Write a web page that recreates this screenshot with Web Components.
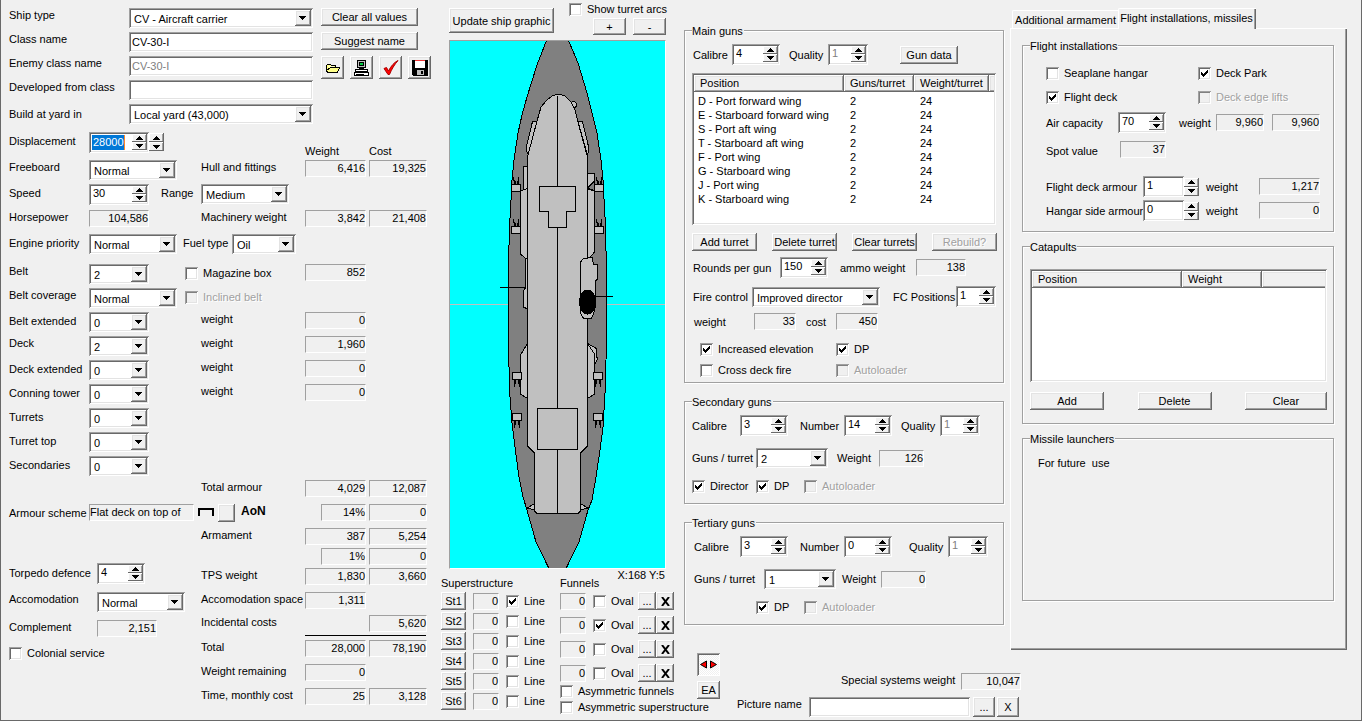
<!DOCTYPE html>
<html lang="en">
<head>
<meta charset="utf-8">
<title>Ship design</title>
<style>
  html, body { margin: 0; background: #f0f0f0; }
  body { font: 11px/14px "Liberation Sans", Arial, sans-serif; color: #000; }
</style>
</head>
<body>
<ship-designer></ship-designer>
<script>
const BASE = `
  *, *::before, *::after { box-sizing: border-box; }
  :host { --raised: inset -1px -1px #696969, inset 1px 1px #fff, inset -2px -2px #a0a0a0, inset 2px 2px #e3e3e3;
          --sunken: inset 1px 1px #a0a0a0, inset -1px -1px #fff, inset 2px 2px #696969, inset -2px -2px #e3e3e3;
          box-sizing: border-box; }
  button, input, select { font: inherit; color: inherit; margin: 0; padding: 0; border: 0; border-radius: 0; outline: 0; background: none; }
  label, button { white-space: nowrap; }
  svg { display: block; }
  .row { display: flex; }
`;

function define(name, css, html) {
  customElements.define(name, class extends HTMLElement {
    connectedCallback() {
      if (this.shadowRoot) return;
      const template = document.createElement('template');
      const body = typeof html === 'function' ? html(this) : html;
      template.innerHTML = `<style>${BASE}${css}</style>${body}`;
      this.attachShadow({ mode: 'open' }).append(template.content.cloneNode(true));
    }
  });
}
const attr = (el, name, fallback = '') => el.getAttribute(name) ?? fallback;
const tag = (el) => el.hasAttribute('label')
  ? `<label for="c">${attr(el, 'label')}</label>` : '';
const naming = (el) => el.hasAttribute('label') ? '' : `aria-label="${attr(el, 'name')}"`;
const off = (el) => el.hasAttribute('disabled') ? 'disabled' : '';

const FIELD = `
  :host { display: flex; align-items: flex-start; flex: none; }
  :host([mid]) { align-items: center; }
  label { flex: none; width: var(--l, auto); line-height: var(--lh, 14px); }
`;

define('ui-select', FIELD + `
  .box { position: relative; flex: none; width: var(--w); height: 20px; background: #fff; box-shadow: var(--sunken); }
  select { appearance: none; width: 100%; height: 20px; padding: 2px 18px 0 5px; line-height: 16px; }
  .drop { position: absolute; top: 2px; right: 2px; width: 16px; height: 16px; background: #f0f0f0;
          box-shadow: var(--raised); pointer-events: none; }
`, (el) => `${tag(el)}<div class="box"><select id="c" ${naming(el)}><option>${attr(el, 'value')}</option></select>
  <span class="drop"><svg width="16" height="16" shape-rendering="crispEdges"><path d="M4 6h7v1h-1v1h-1v1h-1v1h-1v-1h-1v-1h-1v-1h-1z"/></svg></span></div>`);

const ARROWS = `
  .ud { flex: none; display: flex; flex-direction: column; width: 15px; height: 17px; }
  .ud button { display: block; height: 8px; width: 15px; background: #f0f0f0; box-shadow: inset -1px -1px #696969, inset 1px 1px #fff, inset -2px 0 #a0a0a0; }
`;
const arrowButtons = `<span class="ud">
  <button type="button" aria-label="Increase"><svg width="15" height="8" shape-rendering="crispEdges"><path d="M7 2h1v1h1v1h1v1h1v1h-7v-1h1v-1h1v-1h1z"/></svg></button>
  <button type="button" aria-label="Decrease"><svg width="15" height="8" shape-rendering="crispEdges"><path d="M4 2h7v1h-1v1h-1v1h-1v1h-1v-1h-1v-1h-1v-1h-1z"/></svg></button></span>`;

define('ui-spin', FIELD + ARROWS + `
  .box { display: flex; justify-content: space-between; flex: none; width: var(--w); height: 21px; padding: 2px; background: #fff; box-shadow: var(--sunken); }
  input { flex: 1; min-width: 0; height: 15px; padding-left: 2px; appearance: textfield; line-height: 15px; }
  input::-webkit-inner-spin-button { appearance: none; }
  input:disabled { color: #808080; -webkit-text-fill-color: #808080; }
  :host([marked]) input { flex: none; width: 33px; margin: 1px 0 0 1px; background: #0078d7; color: #fff; padding-left: 1px; border-right: 1px solid #ff8728; }
  :host([split]) .box { width: calc(var(--w) - 15px); }
  :host([split]) .ud { height: 21px; justify-content: center; }
  :host([split]) .ud button { height: 9px; }
`, (el) => {
  const split = el.hasAttribute('split');
  return `${tag(el)}<div class="box"><input id="c" type="number" value="${attr(el, 'value')}" ${naming(el)} ${off(el)}>${split ? '' : arrowButtons}</div>${split ? arrowButtons : ''}`;
});

define('ui-updown', ARROWS + ':host { display: block; padding-top: 1px; } .ud button { height: 9px; } .ud { height: 18px; }', arrowButtons);

define('ui-text', FIELD + `
  input { flex: none; width: var(--w); height: 20px; padding: 0 3px 1px; background: #fff; box-shadow: var(--sunken); }
  input:disabled { color: #808080; }
`, (el) => `${tag(el)}<input id="c" type="text" value="${attr(el, 'value')}" ${off(el)}>`);

define('ui-readout', FIELD + `
  output { flex: none; display: block; width: var(--w); height: 17px; line-height: 15px; text-align: right; white-space: nowrap;
           border: 1px solid; border-color: #a0a0a0 #fff #fff #a0a0a0; }
  :host([left]) output { text-align: left; }
`, (el) => `${tag(el)}<output id="c" ${naming(el)}>${attr(el, 'value')}</output>`);

define('ui-check', `
  :host { display: flex; flex: none; align-items: center; height: 13px; width: var(--w, auto); }
  label { margin-left: 5px; line-height: 13px; }
  input { appearance: none; flex: none; width: 13px; height: 13px; background: #fff; box-shadow: var(--sunken); }
  .tick { position: relative; flex: none; width: 13px; height: 13px; }
  .tick input { display: block; }
  .tick svg { position: absolute; left: 3px; top: 3px; pointer-events: none; visibility: hidden; }
  input:checked + svg { visibility: visible; }
  input:disabled { background: #f0f0f0; box-shadow: inset 1px 1px #a0a0a0, inset -1px -1px #fff, inset 2px 2px #808080, inset -2px -2px #e3e3e3; }
  :host([disabled]) label { color: #a0a0a0; text-shadow: 1px 1px #fff; }
`, (el) => `<span class="tick"><input id="c" type="checkbox" ${off(el)} ${el.hasAttribute('checked') ? 'checked' : ''}>
  <svg width="7" height="7" shape-rendering="crispEdges"><path d="M0 2h1v1h1v1h1v-1h1v-1h1v-1h1v-1h1v3h-1v1h-1v1h-1v1h-1v1h-1v-1h-1v-1h-1z"/></svg></span>
  <label for="c">${attr(el, 'label')}</label>`);

define('ui-button', `
  :host { display: block; flex: none; width: var(--w); height: var(--h, 18px); }
  button { display: flex; align-items: center; justify-content: center; width: 100%; height: 100%; background: #f0f0f0; box-shadow: var(--raised); }
  button:disabled { color: #a0a0a0; text-shadow: 1px 1px #fff; }
  :host([pressed]) button { background: repeating-conic-gradient(#fff 0 25%, #f0f0f0 0 50%) 0 0 / 2px 2px;
    box-shadow: inset 1px 1px #a0a0a0, inset -1px -1px #fff, inset 2px 2px #696969; }
`, (el) => `<button type="button" aria-label="${attr(el, 'name')}" ${off(el)}><slot></slot></button>`.replace(' aria-label=""', ''));

define('ui-group', `
  :host { display: block; }
  fieldset { position: relative; height: 100%; margin: 0; padding: var(--pad, 13px 0 0 8px); min-width: 0; border: 1px solid #a0a0a0; box-shadow: 1px 1px #fff, inset 1px 1px #fff; }
  legend { position: absolute; top: -7px; left: 7px; padding: 0 1px 0 0; line-height: 14px; background: #f0f0f0; }
`, (el) => `<fieldset><legend>${attr(el, 'label')}</legend><slot></slot></fieldset>`);

define('ui-list', `
  :host { display: block; background: #fff; box-shadow: var(--sunken); padding: 2px; overflow: hidden; }
  table { width: 100%; table-layout: fixed; border-collapse: collapse; }
  th { height: 17px; padding: 0 0 0 6px; font-weight: 400; text-align: left; line-height: 15px; background: #f0f0f0; box-shadow: var(--raised); white-space: nowrap; }
  th:last-child { box-shadow: inset 0 -1px #696969, inset 1px 1px #fff, inset 0 -2px #a0a0a0, inset 2px 2px #e3e3e3; }
  tbody::before { content: ""; display: block; height: 2px; }
  td { height: 14px; line-height: 14px; padding: 0 0 0 6px; white-space: nowrap; }
  td:first-child { padding-left: 4px; }
`, (el) => {
  const cols = attr(el, 'columns').split('|').map((c) => c.split(':'));
  const rows = attr(el, 'rows').split(';').filter(Boolean);
  return `<table><colgroup>${cols.map((c) => `<col style="width:${c[1]}px">`).join('')}<col></colgroup>
    <thead><tr>${cols.map((c) => `<th scope="col">${c[0]}</th>`).join('')}<th></th></tr></thead>
    <tbody>${rows.map((r) => `<tr>${r.split('|').map((d) => `<td>${d}</td>`).join('')}<td></td></tr>`).join('')}</tbody></table>`;
});

define('ship-graphic', `
  :host { display: block; border: 1px solid; border-color: #a0a0a0 #fff #fff #a0a0a0; background: #0ff; }
  svg { width: 100%; height: auto; }
`, () => {
  const deck = '#c0c0c0';
  const gunUp = (x, y) => `<path d="M${x + 2.5} ${y}v-4l-1 -3M${x + 3.5} ${y}v-4M${x + 6.5} ${y}v-4l1 -3M${x + 5.5} ${y}v-4"/><rect x="${x}" y="${y}" width="9" height="7" fill="${deck}"/>`;
  const gunDown = (x, y) => `<path d="M${x + 2} ${y + 7}v7M${x + 3} ${y + 7}v4M${x + 7} ${y + 7}v7M${x + 6} ${y + 7}v4"/><rect x="${x}" y="${y}" width="9" height="7" fill="${deck}"/>`;
  return `<svg viewBox="450 41 215 527" shape-rendering="crispEdges" role="img" aria-label="Ship seen from above" fill="none" stroke="#000" stroke-width="1">
  <path d="M450 304.5H665" stroke="${deck}"/>
  <path fill="#808080" d="M546.5 40.5 537 65 527 97 522 115 518 133 514 160 512 180 511 200 509.5 227 508.5 263V343L509.5 390 512 423 515 447 519 477 523 497 527 510 536 542 549 568.5H566L579 542 588 510 592 500 596 477 600 450 603 427 605 393 606.5 343V267L605.5 233 605 217 603 180 601 160 597 133 592 113 587 93 578 63 568.5 40.5Z"/>
  <path d="M500 287.5H527M596 296.5H613"/>
  <g fill="${deck}">
    <circle cx="573.5" cy="104.5" r="3"/>
    <path d="M523.5 166.5H527.5V189.5H523.5Z"/>
    <path d="M527.5 188.5 520.5 191V254L525.5 258.5H527.5Z"/>
    <path d="M525.5 258.5H527.5V309L523.5 307V290.5L525.5 288Z"/>
    <path d="M587.5 173.5H594.5V181L588 188 587.5 188Z"/>
    <path fill="#808080" d="M594.5 181V190.5L587.5 188Z"/>
    <path d="M587.5 189 594.5 191V252L590 257.5H587.5Z"/>
    <path d="M587.5 343.5 596.5 348.5V356L597.5 359 595 363.5 592 363Z"/>
    <path d="M527.5 343.5 520.5 355V394L527.5 398.5ZM587.5 343.5 594.5 354V394L587.5 398.5Z"/>
    <path d="M534.5 503.5 526.5 508.5 534.5 509.5ZM580.5 503.5 588.5 508.5 580.5 509.5Z"/>
    <path d="M532.5 121.5H537.5L528.5 155 526.5 151V146.5ZM582.5 121.5H578L587.5 155 588.5 151V146.5Z"/>
    <path d="M527.5 157 537 121 541 107 547 100 552 96 556 94.5H560L565 96 571 102 575 110 578 122 587.5 157V446L580.5 453V511L578 513.5H537L534.5 511V453L527.5 446Z"/>
    <path d="M580.5 262 583.5 258.5 592 257.5 593.5 264.5H597.5V279L595.5 281V306L593.5 314 591.5 318.5H583.5L580.5 313Z"/>
    <path d="M557.5 96V186M557.5 228V408M557.5 450V513"/>
    <path d="M539.5 186.5H575.5V211.5H566.5V227.5H548.5V211.5H539.5Z"/>
    <path d="M537.5 408.5H577.5V449.5H537.5Z"/>
  </g>
  <ellipse cx="587.5" cy="302" rx="8" ry="12" fill="#000"/>
  ${gunUp(511.5, 184.5)}${gunUp(511.5, 226.5)}${gunUp(594.5, 184.5)}${gunUp(594.5, 226.5)}
  ${gunDown(512.5, 372.5)}${gunDown(512.5, 413.5)}${gunDown(593.5, 372.5)}${gunDown(593.5, 413.5)}
  </svg>`;
});

const ICONS = {
  open: `<svg width="16" height="14" viewBox="0 0 16 14" shape-rendering="crispEdges"><path fill="#ff8" stroke="#000" d="M1.5 10.5V4.5L2.5 3.5H5.5L6.5 4.5H10.5V6.5H14.5L12.5 11.5H3.5Z"/><path stroke="#000" fill="none" d="M1.5 9.5 5.5 6.5H11"/><path fill="#ffc" d="M3 5h6v1H3z"/></svg>`,
  print: `<svg width="17" height="18" viewBox="0 0 17 18" shape-rendering="crispEdges"><path fill="#fff" stroke="#000" d="M4.5 1.5H12.5V8.5H4.5ZM2.5 10.5H14.5V12.5H2.5ZM1.5 13.5H15.5V16.5H1.5Z"/><path fill="#c0c0c0" d="M5 2h7v6H5z"/><path d="M6 3h5v4H6zM6 9h5v1H6zM3 15h8v1H3z"/><path fill="#0c4" d="M7 4h3v2H7z"/></svg>`,
  check: `<svg width="18" height="18" viewBox="0 0 18 18"><path fill="#f00" stroke="#a00" stroke-width="1" d="M2 9.5 4.5 8.5 6.5 12 C9 7 12 3.5 16 1.5 12.5 5.5 9.5 10.5 7.5 15.5L6 15.5Z"/></svg>`,
  save: `<svg width="16" height="16" viewBox="0 0 16 16" shape-rendering="crispEdges"><path d="M0 0h16v16H1l-1-1z"/><path fill="#fff" d="M3 1h10v7H3z"/><path fill="#e33" d="M3 0h10v1H3z"/><path fill="#c0c0c0" d="M5 10h7v5H5z"/><path d="M9 11h2v3H9z"/></svg>`
};

define('hull-panel', `
  :host { display: block; padding: 8px 0 0 8px; }
  .head { display: flex; gap: 8px; }
  .fields, .side { display: flex; flex-direction: column; gap: 4px; }
  .fields { --l: 120px; --w: 184px; }
  .side { gap: 6px; --w: 97px; }
  .icons { display: flex; gap: 6px; --w: 23px; --h: 23px; }
  .grid { display: grid; grid-template-columns: 192px 104px 64px 58px; margin-top: 8px; grid-auto-rows: 24px; --l: 80px; --lh: 18px; }
  .grid.top { grid-template-rows: 28px 24px 26px 24px 30px; }
  .a { grid-column: 1; } .b { grid-column: 2; } .c { grid-column: 3; } .d { grid-column: 4; }
  .wide { grid-column: 1 / 3; display: flex; gap: 6px; }
  .end { align-self: end; line-height: 18px; }
  .w { --w: 61px; } .k { --w: 58px; } .p { --w: 45px; justify-self: end; margin-right: 3px; }
  .s { --w: 60px; } .m { --w: 88px; }
  .plain { --lh: 14px; }
  .scheme { grid-column: 1 / 3; display: flex; gap: 4px; }
  .scheme strong { font-size: 12px; line-height: 14px; margin-left: 2px; }
  .lower { display: flex; }
  .left { width: 192px; padding-top: 35px; display: flex; flex-direction: column; gap: 8px; --l: 88px; }
  .totals { display: grid; grid-template-columns: 104px 64px 58px; grid-template-rows: 20px 20px 24px 23px 20px 5px; grid-auto-rows: 24px; flex: none; }
  .totals .b { grid-column: 1; } .totals .c { grid-column: 2; } .totals .d { grid-column: 3; }
  .totals .line { grid-column: 2 / 4; height: 1px; width: 121px; background: #000; }
  .checks { grid-column: 1 / 3; padding: 5px 0 0 176px; }
`, `
  <div class="head">
    <div class="fields">
      <ui-select label="Ship type" value="CV - Aircraft carrier"></ui-select>
      <ui-text label="Class name" value="CV-30-I"></ui-text>
      <ui-text label="Enemy class name" value="CV-30-I" disabled></ui-text>
      <ui-text label="Developed from class"></ui-text>
      <ui-select mid label="Build at yard in" value="Local yard (43,000)"></ui-select>
    </div>
    <div class="side">
      <ui-button>Clear all values</ui-button>
      <ui-button>Suggest name</ui-button>
      <div class="icons">
        <ui-button name="Open">${ICONS.open}</ui-button><ui-button name="Print">${ICONS.print}</ui-button>
        <ui-button name="Verify">${ICONS.check}</ui-button><ui-button name="Save">${ICONS.save}</ui-button>
      </div>
    </div>
  </div>
  <div class="grid top">
    <div class="a row"><ui-spin class="s" marked label="Displacement" value="28000"></ui-spin><ui-updown></ui-updown></div>
    <span class="c end">Weight</span><span class="d end">Cost</span>
    <ui-select class="a m plain" label="Freeboard" value="Normal"></ui-select>
    <span class="b">Hull and fittings</span><ui-readout class="c w" name="Hull weight" value="6,416"></ui-readout><ui-readout class="d k" name="Hull cost" value="19,325"></ui-readout>
    <div class="wide" style="gap:12px"><ui-spin class="s" label="Speed" value="30"></ui-spin><ui-select class="m" style="--l:40px" label="Range" value="Medium"></ui-select></div>
    <ui-readout class="a s plain" label="Horsepower" value="104,586"></ui-readout>
    <span class="b">Machinery weight</span><ui-readout class="c w" name="Machinery weight" value="3,842"></ui-readout><ui-readout class="d k" name="Machinery cost" value="21,408"></ui-readout>
    <div class="wide"><ui-select class="m" label="Engine priority" value="Normal"></ui-select><ui-select style="--l:49px;--w:64px" label="Fuel type" value="Oil"></ui-select></div>
  </div>
  <div class="grid" style="margin-top:0">
    <ui-select class="a s plain" style="grid-row:1" label="Belt" value="2"></ui-select>
    <ui-check class="checks" style="grid-row:1" label="Magazine box"></ui-check>
    <ui-readout class="c w" name="Belt weight" value="852"></ui-readout>
    <ui-select class="a m plain" style="grid-row:2" label="Belt coverage" value="Normal"></ui-select>
    <ui-check class="checks" style="grid-row:2" label="Inclined belt" disabled></ui-check>
    <ui-select class="a s" label="Belt extended" value="0"></ui-select><span class="b">weight</span><ui-readout class="c w" name="Belt extended weight" value="0"></ui-readout>
    <ui-select class="a s plain" label="Deck" value="2"></ui-select><span class="b">weight</span><ui-readout class="c w" name="Deck weight" value="1,960"></ui-readout>
    <ui-select class="a s" label="Deck extended" value="0"></ui-select><span class="b">weight</span><ui-readout class="c w" name="Deck extended weight" value="0"></ui-readout>
    <ui-select class="a s" label="Conning tower" value="0"></ui-select><span class="b">weight</span><ui-readout class="c w" name="Conning tower weight" value="0"></ui-readout>
    <ui-select class="a s" label="Turrets" value="0"></ui-select>
    <ui-select class="a s" label="Turret top" value="0"></ui-select>
    <ui-select class="a s" label="Secondaries" value="0"></ui-select>
    <span class="b" style="grid-row:10">Total armour</span><ui-readout class="c w" style="grid-row:10" name="Armour weight" value="4,029"></ui-readout><ui-readout class="d k" style="grid-row:10" name="Armour cost" value="12,087"></ui-readout>
    <div class="scheme"><ui-readout left label="Armour scheme" value="Flat deck on top of" style="--w:105px"></ui-readout>
      <svg width="16" height="16" shape-rendering="crispEdges"><path d="M0 4h16v8h-2V6H2v6H0z"/></svg>
      <ui-button name="Toggle scheme" style="--w:17px"></ui-button><strong>AoN</strong></div>
    <ui-readout class="c p" name="Armour share" value="14%"></ui-readout><ui-readout class="d k" name="Scheme cost" value="0"></ui-readout>
  </div>
  <div class="lower">
    <div class="left">
      <ui-spin style="--w:48px;--lh:20px" label="Torpedo defence" value="4"></ui-spin>
      <ui-select class="m" label="Accomodation" value="Normal"></ui-select>
      <ui-readout class="s" label="Complement" value="2,151"></ui-readout>
      <ui-check style="margin-top:2px" label="Colonial service"></ui-check>
    </div>
    <div class="totals">
      <span class="b">Armament</span><ui-readout class="c w" name="Armament weight" value="387"></ui-readout><ui-readout class="d k" name="Armament cost" value="5,254"></ui-readout>
      <ui-readout class="c p" name="Armament share" value="1%"></ui-readout><ui-readout class="d k" name="Armament extra cost" value="0"></ui-readout>
      <span class="b">TPS weight</span><ui-readout class="c w" name="TPS weight" value="1,830"></ui-readout><ui-readout class="d k" name="TPS cost" value="3,660"></ui-readout>
      <span class="b">Accomodation space</span><ui-readout class="c w" name="Accomodation space" value="1,311"></ui-readout>
      <span class="b">Incidental costs</span><ui-readout class="d k" name="Incidental costs" value="5,620"></ui-readout>
      <div class="line"></div>
      <span class="b">Total</span><ui-readout class="c w" name="Total weight" value="28,000"></ui-readout><ui-readout class="d k" name="Total cost" value="78,190"></ui-readout>
      <span class="b">Weight remaining</span><ui-readout class="c w" name="Weight remaining" value="0"></ui-readout>
      <span class="b">Time, monthly cost</span><ui-readout class="c w" name="Time" value="25"></ui-readout><ui-readout class="d k" name="Monthly cost" value="3,128"></ui-readout>
    </div>
  </div>
`);

const structureRows = [1, 2, 3, 4, 5, 6].map((n) => `<div class="row st">
  <ui-button style="--w:25px">St${n}</ui-button><ui-readout style="--w:26px" name="Superstructure ${n}" value="0"></ui-readout>
  <ui-check label="Line" ${n === 1 ? 'checked' : ''}></ui-check></div>`).join('');
const funnelRows = [1, 2, 3, 4].map((n) => `<div class="row fn">
  <ui-readout style="--w:26px" name="Funnel ${n}" value="0"></ui-readout>
  <ui-check style="--w:38px" label="Oval" ${n === 2 ? 'checked' : ''}></ui-check>
  <span class="row"><ui-button style="--w:18px">...</ui-button><ui-button style="--w:18px"><svg width="9" height="9" viewBox="0 0 9 9" role="img" aria-label="Remove funnel"><path d="M1 0 8 9M8 0 1 9" stroke="#000" stroke-width="2"/></svg></ui-button></span></div>`).join('');

define('graphic-panel', `
  :host { display: block; }
  .bar { display: flex; justify-content: space-between; padding: 3px 14px 0 9px; height: 40px; }
  .bar > ui-button { --w: 105px; --h: 25px; margin-top: 5px; }
  .tools { width: 97px; display: flex; flex-direction: column; gap: 2px; }
  .zoom { display: flex; gap: 7px; justify-content: flex-end; --w: 33px; --h: 17px; }
  ship-graphic { margin: 0 14px 0 9px; }
  .pos { text-align: right; margin: -2px 15px 0 0; line-height: 16px; }
  .lists { display: flex; gap: 16px; margin-top: -7px; padding-left: 1px; white-space: nowrap; }
  .head { line-height: 14px; height: 16px; }
  .st { gap: 7px; height: 18px; margin-bottom: 2px; align-items: center; }
  .col { width: 103px; flex: none; }
  .fn { gap: 7px; height: 18px; margin-bottom: 6px; align-items: center; }
  .asym { display: flex; flex-direction: column; gap: 3px; margin-top: -3px; }
`, `
  <div class="bar"><ui-button>Update ship graphic</ui-button>
    <div class="tools"><ui-check label="Show turret arcs"></ui-check>
      <div class="zoom"><ui-button>+</ui-button><ui-button>-</ui-button></div></div></div>
  <ship-graphic></ship-graphic>
  <div class="pos">X:168 Y:5</div>
  <div class="lists">
    <div class="col"><div class="head">Superstructure</div>${structureRows}</div>
    <div class="col"><div class="head">Funnels</div>${funnelRows}
      <div class="asym"><ui-check label="Asymmetric funnels"></ui-check><ui-check label="Asymmetric superstructure"></ui-check></div></div>
  </div>
`);

define('gun-panel', `
  :host { display: block; padding: 30px 6px 0 4px; }
  ui-group + ui-group { margin-top: 18px; }
  .row { align-items: center; }
  ui-list { margin: 8px 7px 8px 0; height: 152px; }
  .buttons { justify-content: space-between; margin-right: 6px; --w: 65px; }
  .q { --l: 39px; --w: 40px; }
  .cal { --l: 48px; --w: 48px; }
`, `
  <ui-group label="Main guns" style="--pad:13px 0 5px 7px">
    <div class="row"><ui-spin mid style="--l:39px;--w:48px;margin-left:1px" label="Calibre" value="4"></ui-spin>
      <ui-spin mid class="q" style="margin-left:9px" label="Quality" value="1" disabled></ui-spin>
      <ui-button style="--w:58px;margin-left:32px">Gun data</ui-button></div>
    <ui-list columns="Position:150|Guns/turret:70|Weight/turret:75" rows="D - Port forward wing|2|24;E - Starboard forward wing|2|24;S - Port aft wing|2|24;T - Starboard aft wing|2|24;F - Port wing|2|24;G - Starboard wing|2|24;J - Port wing|2|24;K - Starboard wing|2|24"></ui-list>
    <div class="row buttons"><ui-button>Add turret</ui-button><ui-button>Delete turret</ui-button><ui-button>Clear turrets</ui-button><ui-button disabled>Rebuild?</ui-button></div>
    <div class="row" style="margin-top:6px"><ui-spin mid style="--l:87px;--w:48px;margin-left:1px" label="Rounds per gun" value="150"></ui-spin>
      <ui-readout mid style="--l:76px;--w:50px;margin-left:12px" label="ammo weight" value="138"></ui-readout></div>
    <div class="row" style="margin-top:8px"><ui-select mid style="--l:59px;--w:128px;margin-left:1px" label="Fire control" value="Improved director"></ui-select>
      <ui-spin mid style="--l:63px;--w:40px;margin-left:13px" label="FC Positions" value="1"></ui-spin></div>
    <div class="row" style="margin-top:6px"><ui-readout mid style="--l:60px;--w:42px;margin-left:2px" label="weight" value="33"></ui-readout>
      <ui-readout mid style="--l:30px;--w:42px;margin-left:10px" label="cost" value="450"></ui-readout></div>
    <div class="row" style="margin:13px 0 8px 8px"><ui-check style="--w:136px" label="Increased elevation" checked></ui-check><ui-check label="DP" checked></ui-check></div>
    <div class="row" style="margin-left:8px"><ui-check style="--w:136px" label="Cross deck fire"></ui-check><ui-check label="Autoloader" disabled></ui-check></div>
  </ui-group>
  <ui-group label="Secondary guns" style="--pad:13px 0 10px 7px">
    <div class="row"><ui-spin mid class="cal" label="Calibre" value="3"></ui-spin>
      <ui-spin mid style="--l:44px;--w:48px;margin-left:12px" label="Number" value="14"></ui-spin>
      <ui-spin mid class="q" style="margin-left:9px" label="Quality" value="1" disabled></ui-spin></div>
    <div class="row" style="margin-top:12px"><ui-select mid style="--l:64px;--w:72px" label="Guns / turret" value="2"></ui-select>
      <ui-readout mid style="--l:42px;--w:45px;margin-left:9px" label="Weight" value="126"></ui-readout></div>
    <div class="row" style="margin-top:12px"><ui-check style="--w:64px" label="Director" checked></ui-check><ui-check style="--w:48px" label="DP" checked></ui-check><ui-check label="Autoloader" disabled></ui-check></div>
  </ui-group>
  <ui-group label="Tertiary guns" style="--pad:13px 0 10px 9px">
    <div class="row"><ui-spin mid style="--l:46px;--w:48px" label="Calibre" value="3"></ui-spin>
      <ui-spin mid style="--l:44px;--w:48px;margin-left:12px" label="Number" value="0"></ui-spin>
      <ui-spin mid class="q" style="margin-left:17px" label="Quality" value="1" disabled></ui-spin></div>
    <div class="row" style="margin-top:12px"><ui-select mid style="--l:70px;--w:72px" label="Guns / turret" value="1"></ui-select>
      <ui-readout mid style="--l:39px;--w:45px;margin-left:6px" label="Weight" value="0"></ui-readout></div>
    <div class="row" style="margin:12px 0 0 62px"><ui-check style="--w:48px" label="DP" checked></ui-check><ui-check label="Autoloader" disabled></ui-check></div>
  </ui-group>
`);

define('flight-panel', `
  :host { display: flex; flex-direction: column; padding: 8px 14px 0 0; }
  .tabs { display: flex; align-items: flex-end; padding-left: 2px; height: 21px; margin-bottom: -1px; }
  .tabs button { height: 18px; width: 106px; margin-bottom: 1px; text-align: center; border: solid #fff; border-width: 1px 0 0 1px; border-radius: 2px 0 0 0; }
  .tabs button[aria-selected=true] { position: relative; width: 138px; height: 21px; margin: 0; padding: 0 2px 2px 0; background: #f0f0f0; box-shadow: inset -1px 0 #696969, inset -2px 0 #a0a0a0; }
  .sheet { flex: 1; padding: 16px 13px 49px 11px; border: solid #fff; border-width: 1px 0 0 1px; box-shadow: inset -1px -1px #696969, inset -2px -2px #a0a0a0; }
  .row { align-items: center; }
  ui-group { --pad: 21px 0 0 23px; }
  ui-group + ui-group { margin-top: 14px; }
  .w { --l: 37px; --w: 48px; }
  ui-list { height: 113px; }
  .buttons { justify-content: space-between; margin-top: 10px; --w: 74px; }
  p { margin: 0; white-space: pre; }
`, `
  <div class="tabs" role="tablist"><button role="tab" aria-selected="false">Additional armament</button><button role="tab" aria-selected="true">Flight installations, missiles</button></div>
  <div class="sheet">
    <ui-group label="Flight installations" style="height:187px">
      <div class="row"><ui-check style="--w:152px" label="Seaplane hangar"></ui-check><ui-check label="Deck Park" checked></ui-check></div>
      <div class="row" style="margin-top:11px"><ui-check style="--w:152px" label="Flight deck" checked></ui-check><ui-check label="Deck edge lifts" disabled></ui-check></div>
      <div class="row" style="margin-top:8px"><ui-spin mid style="--l:72px;--w:48px" label="Air capacity" value="70"></ui-spin>
        <ui-readout mid class="w" style="margin-left:13px" label="weight" value="9,960"></ui-readout>
        <ui-readout class="w" style="margin-left:8px" name="Air group cost" value="9,960"></ui-readout></div>
      <div class="row" style="margin-top:8px"><ui-readout style="--l:74px;--w:46px;--lh:20px" label="Spot value" value="37"></ui-readout></div>
      <div class="row" style="margin-top:15px"><ui-spin mid split style="--l:97px;--w:56px" label="Flight deck armour" value="1"></ui-spin>
        <ui-readout mid style="--l:53px;--w:61px;margin-left:7px" label="weight" value="1,217"></ui-readout></div>
      <div class="row" style="margin-top:3px"><ui-spin mid split style="--l:97px;--w:56px" label="Hangar side armour" value="0"></ui-spin>
        <ui-readout mid style="--l:53px;--w:61px;margin-left:7px" label="weight" value="0"></ui-readout></div>
    </ui-group>
    <ui-group label="Catapults" style="--pad:22px 6px 13px 7px">
      <ui-list columns="Position:150|Weight:80"></ui-list>
      <div class="row buttons"><ui-button>Add</ui-button><ui-button>Delete</ui-button><ui-button style="--w:82px">Clear</ui-button></div>
    </ui-group>
    <ui-group label="Missile launchers" style="--pad:17px 15px;height:163px"><p>For future  use</p></ui-group>
  </div>
`);

define('design-footer', `
  :host { display: flex; gap: 17px; padding: 3px 0 3px 17px; }
  .keys { display: flex; flex-direction: column; gap: 5px; --w: 23px; }
  .fields { width: 284px; padding-top: 20px; display: flex; flex-direction: column; gap: 7px; }
  .fields ui-readout { align-self: flex-end; --l: 120px; --w: 60px; }
  .fields ui-text { --l: 72px; --w: 161px; margin-right: 3px; }
  .fields ui-button { --w: 22px; --h: 20px; margin-right: 2px; }
`, `
  <div class="keys">
    <ui-button pressed name="Mirror" style="--h:23px"><svg width="17" height="9" viewBox="0 0 17 9"><path d="M0.5 4.5 6.5 1V8ZM10.5 1 16.5 4.5 10.5 8Z" fill="#f00" stroke="#000" stroke-width="1"/></svg></ui-button>
    <ui-button>EA</ui-button></div>
  <div class="fields"><ui-readout label="Special systems weight" value="10,047"></ui-readout>
    <div class="row"><ui-text label="Picture name"></ui-text><ui-button>...</ui-button><ui-button>X</ui-button></div></div>
`);

define('ship-designer', `
  :host { display: grid; grid-template-columns: minmax(430px, 439fr) minmax(240px, 240fr) minmax(681px, 681fr);
    min-height: 100vh; border: solid #696969; border-width: 0 1px 1px 1px; background: #f0f0f0; }
  .right { display: flex; flex-direction: column; }
  .top { display: grid; grid-template-columns: 330fr 351fr; }
`, `<hull-panel></hull-panel><graphic-panel></graphic-panel>
  <div class="right"><div class="top"><gun-panel></gun-panel><flight-panel></flight-panel></div><design-footer></design-footer></div>`);
</script>
</body>
</html>
